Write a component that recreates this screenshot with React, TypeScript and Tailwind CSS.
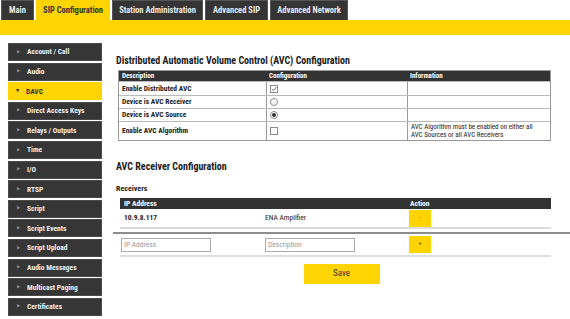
const font = "font-['Roboto_Condensed','Liberation_Sans_Narrow','DejaVu_Sans_Condensed',Roboto,sans-serif]";

const tabs = [
  { label: "Main", w: "w-[33px]", active: false },
  { label: "SIP Configuration", w: "w-[74px]", active: true },
  { label: "Station Administration", w: "w-[91px]", active: false },
  { label: "Advanced SIP", w: "w-[63px]", active: false },
  { label: "Advanced Network", w: "w-[78px]", active: false },
];

const menu = [
  "Account / Call",
  "Audio",
  "DAVC",
  "Direct Access Keys",
  "Relays / Outputs",
  "Time",
  "I/O",
  "RTSP",
  "Script",
  "Script Events",
  "Script Upload",
  "Audio Messages",
  "Multicast Paging",
  "Certificates",
];

function Checkbox({ checked }: { checked?: boolean }) {
  return (
    <span className="w-[8px] h-[8px] border border-[#8a8a8a] bg-white flex items-center justify-center">
      {checked && (
        <svg width="6" height="6" viewBox="0 0 6 6">
          <path d="M0.8 3.1 L2.4 4.6 L5.3 1.2" stroke="#555" strokeWidth="0.9" fill="none" />
        </svg>
      )}
    </span>
  );
}

function Radio({ checked }: { checked?: boolean }) {
  return (
    <span className="w-[8px] h-[8px] rounded-full border border-[#8a8a8a] bg-white flex items-center justify-center">
      {checked && <span className="w-[4px] h-[4px] rounded-full bg-[#333]" />}
    </span>
  );
}

const rows = [
  { d: "Enable Distributed AVC", c: <Checkbox checked />, i: null, h: "h-[14px]" },
  { d: "Device is AVC Receiver", c: <Radio />, i: null, h: "h-[13px]" },
  { d: "Device is AVC Source", c: <Radio checked />, i: null, h: "h-[13px]" },
  {
    d: "Enable AVC Algorithm",
    c: <Checkbox />,
    i: (
      <>
        AVC Algorithm must be enabled on either all
        <br />
        AVC Sources or all AVC Receivers
      </>
    ),
    h: "h-[19px]",
  },
];

export default function App() {
  return (
    <div className={`w-[570px] h-[319px] bg-white overflow-hidden text-[#222] ${font}`}>
      <div className="flex h-[20px] gap-[2px] pl-[1px]">
        {tabs.map((t) => (
          <div
            key={t.label}
            className={`${t.w} flex items-center justify-center text-[8.5px] font-bold ${
              t.active ? "bg-[#ffd400] text-[#333]" : "bg-[#353535] text-[#e8e8e8] border border-[#555] border-b-0"
            }`}
          >
            {t.label}
          </div>
        ))}
      </div>
      <div className="h-[15px] bg-[#ffd400]" />

      <div className="flex">
        <div className="w-[113px] pl-[8px] pt-[8px] flex flex-col gap-[1.6px]">
          {menu.map((m) => {
            const active = m === "DAVC";
            return (
              <div
                key={m}
                className={`w-[94px] h-[18px] flex items-center text-[7.5px] font-bold ${
                  active ? "bg-[#ffd400] text-[#333]" : "bg-[#363636] text-[#f0f0f0] border border-[#4a4a4a]"
                }`}
              >
                <span className={`w-[18px] pl-[8px] text-[4.5px] ${active ? "text-[#333]" : "text-[#8a8a8a]"}`}>
                  {active ? "▼" : "▶"}
                </span>
                {m}
              </div>
            );
          })}
        </div>

        <div className="w-[457px] flex flex-col pt-[19px]">
          <h1 className="pl-[3px] h-[14px] leading-[14px] text-[10px] font-bold text-[#1a1a1a]">
            Distributed Automatic Volume Control (AVC) Configuration
          </h1>
          <div className="ml-[5px] mt-[2px] w-[433px] border border-[#999] text-[7.5px]">
            <div className="flex h-[10px] bg-[#333] text-white font-bold items-center text-[7px]">
              <div className="w-[147px] pl-[3px]">Description</div>
              <div className="w-[141px] pl-[3px]">Configuration</div>
              <div className="flex-1 pl-[3px]">Information</div>
            </div>
            {rows.map((r) => (
              <div key={r.d} className={`flex ${r.h} border-t border-[#bbb]`}>
                <div className="w-[147px] pl-[3px] flex items-center font-bold">{r.d}</div>
                <div className="w-[141px] pl-[3px] flex items-center border-l border-[#999]">{r.c}</div>
                <div className="flex-1 pl-[3px] flex items-center border-l border-[#999] leading-[8.5px] text-[7px]">
                  <span>{r.i}</span>
                </div>
              </div>
            ))}
          </div>

          <h2 className="pl-[3px] mt-[19px] h-[14px] leading-[14px] text-[10px] font-bold text-[#1a1a1a]">
            AVC Receiver Configuration
          </h2>
          <div className="pl-[3px] mt-[10px] h-[10px] leading-[10px] text-[8px] font-bold">Receivers</div>

          <div className="ml-[7px] mt-[4px] w-[431px] text-[7.5px]">
            <div className="flex h-[11px] bg-[#333] text-white font-bold items-center">
              <div className="w-[145px] shrink-0 pl-[4px]">IP Address</div>
              <div className="w-[144px] shrink-0" />
              <div className="flex-1 pl-[1px]">Action</div>
            </div>
            <div className="flex h-[20px] items-center border-b-2 border-[#ddd]">
              <div className="w-[145px] shrink-0 pl-[4px] font-bold">10.9.8.117</div>
              <div className="w-[144px] shrink-0">ENA Amplifier</div>
              <div className="flex-1">
                <button className="w-[22px] h-[17px] bg-[#ffd400] text-[#555] text-[7px] leading-none">-</button>
              </div>
            </div>
          </div>

          <div className="mt-[3px] h-[2px] bg-[#8c8c8c]" />

          <div className="ml-[7px] w-[431px] flex items-center h-[23px] border-b-2 border-[#ddd] text-[7.5px]">
            <div className="w-[145px] shrink-0 pl-[1px]">
              <div className="w-[90px] h-[14px] border border-[#aaa] flex items-center pl-[2px] text-[#999]">IP Address</div>
            </div>
            <div className="w-[144px] shrink-0">
              <div className="w-[90px] h-[14px] border border-[#aaa] flex items-center pl-[2px] text-[#999]">Description</div>
            </div>
            <div className="flex-1">
              <button className="w-[22px] h-[17px] bg-[#ffd400] text-[#555] text-[7px] leading-none">+</button>
            </div>
          </div>

          <div className="flex justify-center mt-[7px]">
            <button className="w-[76px] h-[20px] bg-[#ffd400] text-[#333] text-[9px]">Save</button>
          </div>
        </div>
      </div>
    </div>
  );
}
